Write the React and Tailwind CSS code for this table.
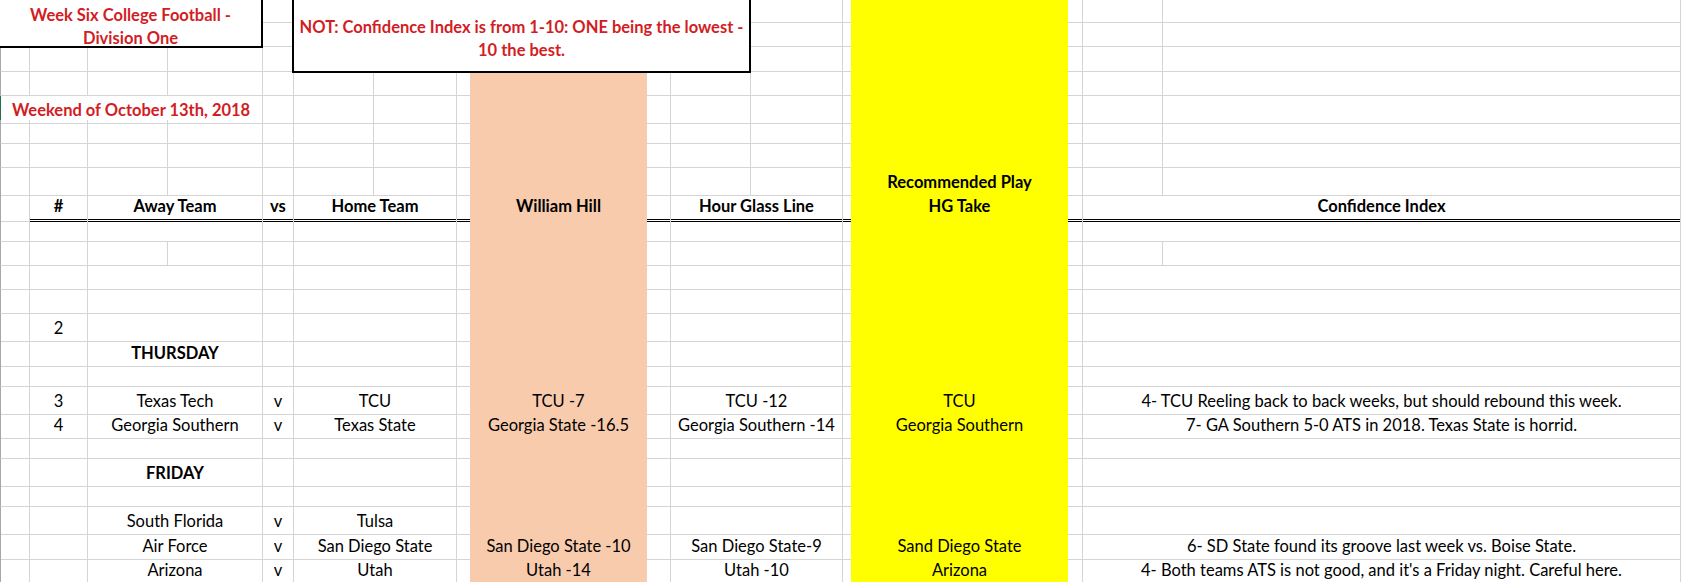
import React from 'react'

// column grid: widths in px, gridline on right edge of most columns
const GRID =
    'grid grid-cols-[30px_58px_80px_95px_31px_80px_83px_13px_177px_24px_80px_92px_8px_217px_15px_80px_518px]'

const LINE = 'border-[#d4d4d4]'

const ROWS = [
    { h: 'h-[23px]', sp: [1, 1, 1, 1] },
    { h: 'h-[24px]', sp: [1, 1, 1, 1] },
    { h: 'h-[25px]', sp: [1, 1, 1, 1] },
    { h: 'h-[24px]', sp: [1, 1, 1, 1] },
    { h: 'h-[24px]', sp: [0, 1, 1, 1], lead: 'Weekend of October 13th, 2018' },
    { h: 'h-[24px]', sp: [1, 1, 1, 1] },
    { h: 'h-[24px]', sp: [1, 1, 1, 1] },
    { h: 'h-[24px]', sp: [1, 1, 1, 1], take: 'Recommended Play', bold: true },
    {
        h: 'h-[27px]',
        header: true,
        bold: true,
        num: '#',
        away: 'Away Team',
        vs: 'vs',
        home: 'Home Team',
        wh: 'William Hill',
        hg: 'Hour Glass Line',
        take: 'HG Take',
        conf: 'Confidence Index',
    },
    { h: 'h-[23px]' },
    { h: 'h-[24px]', sp: [1, 0, 0, 1] },
    { h: 'h-[24px]' },
    { h: 'h-[24px]' },
    { h: 'h-[25px]', num: '2' },
    { h: 'h-[24px]', away: 'THURSDAY', bold: true },
    { h: 'h-[24px]' },
    {
        h: 'h-[24px]',
        num: '3',
        away: 'Texas Tech',
        vs: 'v',
        home: 'TCU',
        wh: 'TCU -7',
        hg: 'TCU -12',
        take: 'TCU',
        conf: '4- TCU Reeling back to back weeks, but should rebound this week.',
    },
    {
        h: 'h-[24px]',
        num: '4',
        away: 'Georgia Southern',
        vs: 'v',
        home: 'Texas State',
        wh: 'Georgia State -16.5',
        hg: 'Georgia Southern -14',
        take: 'Georgia Southern',
        conf: '7- GA Southern 5-0 ATS in 2018. Texas State is horrid.',
    },
    { h: 'h-[24px]' },
    { h: 'h-[24px]', away: 'FRIDAY', bold: true },
    { h: 'h-[24px]' },
    { h: 'h-[25px]', away: 'South Florida', vs: 'v', home: 'Tulsa' },
    {
        h: 'h-[24px]',
        away: 'Air Force',
        vs: 'v',
        home: 'San Diego State',
        wh: 'San Diego State -10',
        hg: 'San Diego State-9',
        take: 'Sand Diego State',
        conf: '6- SD State found its groove last week vs. Boise State.',
    },
    {
        h: 'h-[24px]',
        away: 'Arizona',
        vs: 'v',
        home: 'Utah',
        wh: 'Utah -14',
        hg: 'Utah -10',
        take: 'Arizona',
        conf: "4- Both teams ATS is not good, and it's a Friday night. Careful here.",
    },
    { h: 'h-[10px]' },
]

const Cell = ({ text, span = '', right = true, fill = '', bottom = '', bold }) => {
    const b = bottom || (fill ? 'border-b border-b-transparent' : `border-b ${LINE}`)
    return (
        <div
            className={`${span} ${right ? `border-r ${LINE}` : ''} ${b} ${fill} flex items-center justify-center pt-[2px] whitespace-nowrap ${bold ? 'font-bold' : ''}`}
        >
            {text}
        </div>
    )
}

// a pair of columns that is either split by a gridline or merged
const Pair = ({ split, text, bold, bottom }) =>
    split && !text ? (
        <>
            <Cell bottom={bottom} />
            <Cell bottom={bottom} />
        </>
    ) : (
        <Cell span="col-span-2" text={text} bold={bold} bottom={bottom} />
    )

const Row = ({ row }) => {
    const sp = row.sp || [0, 0, 0, 0]
    const dbl = row.header ? 'border-b-[3px] border-double border-b-black' : ''
    const bold = row.bold
    return (
        <div className={`${GRID} ${row.h}`}>
            {row.lead ? (
                <div className="col-span-4 border-r border-b border-[#d4d4d4] border-l border-l-[#217346] flex items-center pl-[11px] pt-[2px] whitespace-nowrap font-bold text-[#d21d24]">
                    {row.lead}
                </div>
            ) : (
                <>
                    <div className={`border-l border-r border-b ${LINE} border-l-[#a8a8a8]`} />
                    <Cell text={row.num} bold={bold} bottom={dbl} />
                    <Pair split={sp[0]} text={row.away} bold={bold} bottom={dbl} />
                </>
            )}
            <Cell text={row.vs} bold={bold} bottom={dbl} />
            <Pair split={sp[1]} text={row.home} bold={bold} bottom={dbl} />
            <Cell right={false} bottom={dbl} />
            <Cell right={false} fill="bg-[#f8cbad]" text={row.wh} bold={bold} bottom={dbl} />
            <Cell bottom={dbl} />
            <Pair split={sp[2]} text={row.hg} bold={bold} bottom={dbl} />
            <Cell right={false} bottom={dbl} />
            <Cell right={false} fill="bg-[#ffff00]" text={row.take} bold={bold} bottom={dbl} />
            <Cell bottom={dbl} />
            <Pair split={sp[3]} text={row.conf} bold={bold} bottom={dbl} />
        </div>
    )
}

export default function App() {
    return (
        <div className="relative w-[1681px] h-[582px] overflow-hidden bg-white text-black text-[16.5px] font-[family-name:Lato,sans-serif]">
            {ROWS.map((row, i) => (
                <Row key={i} row={row} />
            ))}

            {/* text boxes floating over the sheet */}
            <div className="absolute left-[-2px] top-[-2px] w-[265px] h-[50px] border-2 border-black bg-white pt-[4px] text-center font-bold text-[#d21d24] leading-[22.5px] whitespace-nowrap">
                Week Six College Football -
                <br />
                Division One
            </div>
            <div className="absolute left-[292px] top-[-2px] w-[459px] h-[75px] border-2 border-black bg-white pt-[16px] text-center font-bold text-[#d21d24] leading-[23px] whitespace-nowrap">
                NOT: Confidence Index is from 1-10: ONE being the lowest -
                <br />
                10 the best.
            </div>
        </div>
    )
}
